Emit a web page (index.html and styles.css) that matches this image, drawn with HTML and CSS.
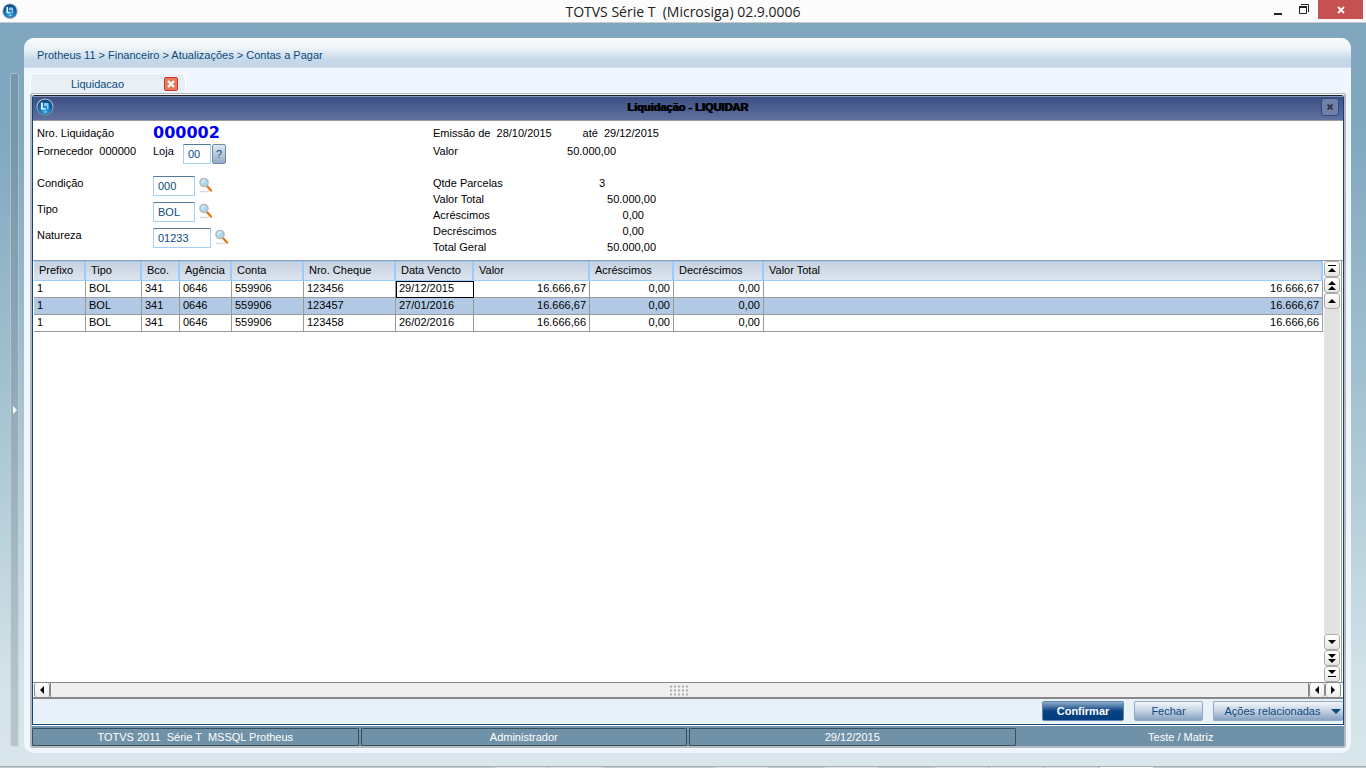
FILE: index.html
```html
<!DOCTYPE html>
<html lang="pt-BR">
<head>
<meta charset="utf-8">
<title>TOTVS Série T (Microsiga) 02.9.0006</title>
<link rel="stylesheet" href="styles.css">
</head>
<body>
<svg class="defs" aria-hidden="true">
  <defs>
    <radialGradient id="orb" cx="50%" cy="75%" r="70%"><stop offset="0" stop-color="#35aee8"/><stop offset=".6" stop-color="#1468ad"/><stop offset="1" stop-color="#0b4582"/></radialGradient>
    <linearGradient id="rim" x1="0" y1="0" x2="0" y2="1"><stop offset="0" stop-color="#c9ced6"/><stop offset="1" stop-color="#6f8396"/></linearGradient>
    <symbol id="logo" viewBox="0 0 18 18">
      <circle cx="9" cy="9" r="8.6" fill="url(#rim)"/><circle cx="9" cy="9" r="7.5" fill="url(#orb)"/>
      <path d="M5 4.500h1.800v5.500h2.700v1.500H5z" fill="#e9f6ff"/><path d="M8 5h4.500v6h-1.500V8H8z" fill="#8fc8ec"/><path d="M8.500 14h2" stroke="#d6f0ff"/>
    </symbol>
    <symbol id="lens" viewBox="0 0 16 16">
      <path d="M2 14.500h9" stroke="#dcdcdc" stroke-width="1.500"/>
      <path d="M8.500 8.500l4.500 5" stroke="#e07b1a" stroke-width="2.400" stroke-linecap="round"/>
      <circle cx="6" cy="5.500" r="4" fill="#a9dcee" stroke="#b4bac0" stroke-width="1.600"/>
      <path d="M4 6a2.500 2.500 0 0 1 3-2.800" stroke="#fff" fill="none"/>
    </symbol>
  </defs>
</svg>
<header class="titlebar">
  <svg class="app-icon"><use href="#logo"/></svg>
  <h1 class="app-title">TOTVS Série T&nbsp; (Microsiga) 02.9.0006</h1>
  <div class="window-controls">
    <button class="control" aria-label="Minimizar"><svg width="8" height="14"><path d="M0 12h8" stroke="#222" stroke-width="2"/></svg></button>
    <button class="control" aria-label="Restaurar"><svg width="11" height="14"><path d="M2 2.500h7.500V10M.500 5.500h7v6h-7z" fill="none" stroke="#222"/><path d="M0 5h8" stroke="#222" stroke-width="2"/></svg></button>
    <button class="control control-close" aria-label="Fechar janela"><svg width="8" height="8"><path d="M1 1l6 6M7 1L1 7" stroke="#fff" stroke-width="1.800"/></svg></button>
  </div>
</header>
<div class="desktop">
  <button class="side-handle" aria-label="Expandir menu"><svg width="4" height="8"><path d="M0 0l4 4-4 4z" fill="#fff"/></svg></button>
  <div class="shell">
    <nav class="breadcrumb">Protheus 11 &gt; Financeiro &gt; Atualizações &gt; Contas a Pagar</nav>
    <div class="workspace">
      <div class="tabs">
        <div class="tab"><span class="tab-label">Liquidacao</span><button class="tab-close" aria-label="Fechar aba"><svg width="8" height="8"><path d="M1 1l6 6M7 1L1 7" stroke="#fff" stroke-width="2.200"/></svg></button></div>
      </div>
      <div class="frame">
        <section class="window">
          <div class="window-head">
            <svg class="window-icon"><use href="#logo"/></svg>
            <h2 class="window-title">Liquidação - LIQUIDAR</h2>
            <button class="window-close" aria-label="Fechar liquidação"><svg width="6" height="6"><path d="M.500.500l5 5M5.500.500l-5 5" stroke="#2b3045" stroke-width="1.800"/></svg></button>
          </div>
          <form class="form">
            <div class="fields">
              <div class="field field-short"><span class="label">Nro. Liquidação</span><output class="number">000002</output></div>
              <div class="field field-store"><span class="label">Fornecedor &nbsp;000000</span><label class="store-label" for="loja">Loja</label><input class="input input-xs" id="loja" value="00"><button type="button" class="help" aria-label="Ajuda">?</button></div>
              <div class="field"><label class="label" for="condicao">Condição</label><input class="input input-sm" id="condicao" value="000"><button type="button" class="lookup" aria-label="Pesquisar condição"><svg><use href="#lens"/></svg></button></div>
              <div class="field"><label class="label" for="tipo">Tipo</label><input class="input input-sm" id="tipo" value="BOL"><button type="button" class="lookup" aria-label="Pesquisar tipo"><svg><use href="#lens"/></svg></button></div>
              <div class="field"><label class="label" for="natureza">Natureza</label><input class="input input-md" id="natureza" value="01233"><button type="button" class="lookup" aria-label="Pesquisar natureza"><svg><use href="#lens"/></svg></button></div>
            </div>
            <div class="summary">
              <div class="period"><span>Emissão de &nbsp;28/10/2015</span><span>até &nbsp;29/12/2015</span></div>
              <dl class="line line-value"><dt>Valor</dt><dd>50.000,00</dd></dl>
              <dl class="line line-count"><dt>Qtde Parcelas</dt><dd>3</dd></dl>
              <dl class="line"><dt>Valor Total</dt><dd>50.000,00</dd></dl>
              <dl class="line line-inset"><dt>Acréscimos</dt><dd>0,00</dd></dl>
              <dl class="line line-inset"><dt>Decréscimos</dt><dd>0,00</dd></dl>
              <dl class="line"><dt>Total Geral</dt><dd>50.000,00</dd></dl>
            </div>
          </form>
          <div class="grid">
            <div class="grid-main">
              <table class="table">
                <colgroup><col class="c-prefix"><col class="c-type"><col class="c-bank"><col class="c-branch"><col class="c-account"><col class="c-check"><col class="c-date"><col class="c-value"><col class="c-add"><col class="c-sub"><col></colgroup>
                <thead><tr><th>Prefixo</th><th>Tipo</th><th>Bco.</th><th>Agência</th><th>Conta</th><th>Nro. Cheque</th><th>Data Vencto</th><th>Valor</th><th>Acréscimos</th><th>Decréscimos</th><th>Valor Total</th></tr></thead>
                <tbody>
                  <tr><td>1</td><td>BOL</td><td>341</td><td>0646</td><td>559906</td><td>123456</td><td class="active">29/12/2015</td><td class="num">16.666,67</td><td class="num">0,00</td><td class="num">0,00</td><td class="num">16.666,67</td></tr>
                  <tr class="alt"><td>1</td><td>BOL</td><td>341</td><td>0646</td><td>559906</td><td>123457</td><td>27/01/2016</td><td class="num">16.666,67</td><td class="num">0,00</td><td class="num">0,00</td><td class="num">16.666,67</td></tr>
                  <tr><td>1</td><td>BOL</td><td>341</td><td>0646</td><td>559906</td><td>123458</td><td>26/02/2016</td><td class="num">16.666,66</td><td class="num">0,00</td><td class="num">0,00</td><td class="num">16.666,66</td></tr>
                </tbody>
              </table>
            </div>
            <div class="vscroll">
              <button class="step" aria-label="Primeira linha"><svg width="8" height="8"><path d="M0 0h8v1H0zM4 3l4 4H0z"/></svg></button>
              <button class="step" aria-label="Página anterior"><svg width="8" height="9"><path d="M4 0l4 4H0zM4 5l4 4H0z"/></svg></button>
              <button class="step" aria-label="Linha anterior"><svg width="8" height="4"><path d="M4 0l4 4H0z"/></svg></button>
              <div class="vtrack"></div>
              <button class="step" aria-label="Próxima linha"><svg width="8" height="4"><path d="M0 0h8L4 4z"/></svg></button>
              <button class="step" aria-label="Próxima página"><svg width="8" height="9"><path d="M0 0h8L4 4zM0 5h8L4 9z"/></svg></button>
              <button class="step" aria-label="Última linha"><svg width="8" height="8"><path d="M0 0h8L4 4zM0 6h8v1H0z"/></svg></button>
            </div>
          </div>
          <div class="hscroll">
            <button class="hstep" aria-label="Rolar para a esquerda"><svg width="4" height="8"><path d="M4 0v8L0 4z"/></svg></button>
            <div class="thumb"><svg width="19" height="11"><path d="M0 1.500h19M0 5.500h19M0 9.500h19" stroke="#b0b0b0" stroke-width="2" stroke-dasharray="2 2"/></svg></div>
            <button class="hstep" aria-label="Recuar"><svg width="4" height="8"><path d="M4 0v8L0 4z"/></svg></button>
            <button class="hstep" aria-label="Rolar para a direita"><svg width="4" height="8"><path d="M0 0v8l4-4z"/></svg></button>
          </div>
          <div class="actions">
            <button class="button button-primary">Confirmar</button>
            <button class="button button-close">Fechar</button>
            <button class="button button-more">Ações relacionadas<svg width="10" height="5"><path d="M0 0h10L5 5z" fill="#0b4a7d"/></svg></button>
          </div>
        </section>
        <footer class="status">
          <span class="cell">TOTVS 2011 &nbsp;Série T &nbsp;MSSQL Protheus</span>
          <span class="cell">Administrador</span>
          <span class="cell">29/12/2015</span>
          <span class="cell cell-last">Teste / Matriz</span>
        </footer>
      </div>
    </div>
  </div>
</div>
<div class="taskbar"><i></i><i></i><i class="far"></i><i class="mid"></i><i class="mid"></i><i></i><i></i><i class="lit"></i></div>
</body>
</html>
```
FILE: styles.css
```css
* { box-sizing: border-box; }
body {
  margin: 0;
  height: 100vh;
  display: flex;
  flex-direction: column;
  overflow: hidden;
  font: 11px/14px "Liberation Sans", Arial, sans-serif;
  color: #000;
}
button, input { font: inherit; padding: 0; margin: 0; }
button { display: flex; align-items: center; justify-content: center; border: 0; background: none; }
svg { display: block; flex: none; }
h1, h2, dl, dd { margin: 0; }
.defs { position: absolute; width: 0; height: 0; }

.titlebar {
  flex: none;
  height: 23px;
  display: grid;
  grid-template-columns: 1fr auto 1fr;
  background: #fcfcfc;
  border-bottom: 1px solid #c9cdd0;
}
.app-icon { width: 16px; height: 16px; margin: 3px 2px; }
.app-title { font: 14px/23px "Open Sans", "Noto Sans", sans-serif; color: #222; }
.window-controls { display: flex; justify-content: flex-end; align-items: flex-start; padding-right: 3px; }
.control { width: 26px; height: 18px; }
.control-close { width: 45px; height: 19px; margin-left: 1px; background: #c75050; }

.desktop {
  flex: 1;
  min-height: 0;
  display: flex;
  padding: 15px 15px 13px 10px;
  gap: 5px;
  background: linear-gradient(#80a6bf, #81a8bf 15%, #a9c6d3 55%, #d2e2e8 88%, #d9e6eb);
}
.side-handle {
  width: 9px;
  margin: 35px 0 6px;
  border: 1px solid rgba(255, 255, 255, .35);
  border-radius: 2px;
  background: rgba(90, 100, 110, .25);
}
.shell {
  flex: 1;
  min-width: 0;
  display: flex;
  flex-direction: column;
  border-radius: 10px;
  background: #eff6fe;
  overflow: hidden;
}
.breadcrumb {
  flex: none;
  height: 30px;
  padding: 10px 13px 0;
  color: #0b4a7d;
  background: linear-gradient(#f9fbfd, #eef3f8 35%, #c6d8e8 75%, #c2d4e6);
  border-bottom: 1px solid #d5e2ef;
}
.workspace {
  flex: 1;
  min-height: 0;
  display: flex;
  flex-direction: column;
  padding: 5px 5px 5px 6px;
}
.tabs { height: 20px; }
.tab {
  width: 156px;
  height: 21px;
  display: flex;
  align-items: center;
  background: #e8eff5;
  border: 1px solid #fff;
  border-bottom: 0;
  border-radius: 3px 3px 0 0;
}
.tab-label { flex: 1; text-align: center; color: #0b4a7d; }
.tab-close { width: 14px; height: 14px; margin-right: 7px; border: 1px solid #cf3326; border-radius: 2px; background: #e27a5b; }
.frame {
  flex: 1;
  min-height: 0;
  display: flex;
  flex-direction: column;
  border: 1px solid #b5b8bd;
  border-width: 1px 2px 2px;
  border-radius: 3px;
}
.window {
  flex: 1;
  min-height: 0;
  display: flex;
  flex-direction: column;
  margin-top: 1px;
  border: 1px solid #0f437c;
  border-top-color: #222;
  border-radius: 3px 3px 0 0;
  background: #fff;
}
.window-head {
  flex: none;
  height: 25px;
  display: grid;
  grid-template-columns: 1fr auto 1fr;
  align-items: center;
  padding: 0 4px 3px 3px;
  background: linear-gradient(#3c5085, #60709f);
  border-top: 1px solid #8796b5;
  border-bottom: 1px solid #999;
}
.window-icon { width: 18px; height: 18px; }
.window-title { font: bold 11px/14px "Liberation Sans", Arial, sans-serif; text-shadow: 1px 0 #000; }
.window-close { justify-self: end; width: 18px; height: 18px; border: 1px solid #2f4a82; border-radius: 3px; background: #7080a9; }

.form { flex: none; display: flex; height: 139px; padding: 5px 4px 0; }
.fields { width: 396px; display: flex; flex-direction: column; }
.field { display: flex; align-items: flex-start; height: 26px; }
.field-short { height: 18px; }
.field-store { height: 32px; }
.label { width: 116px; }
.store-label { width: 30px; }
.number { font: bold 16px/14px "DejaVu Sans", sans-serif; color: #0000f0; }
.input {
  height: 20px;
  padding: 0 4px;
  border: 1px solid #a6cff5;
  border-top-color: #57799b;
  color: #0b4a7d;
  background: #fff;
}
.input-xs { width: 28px; }
.input-sm { width: 42px; }
.input-md { width: 58px; }
.help { width: 14px; height: 20px; margin-left: 1px; border: 1px solid #6f8ba9; border-radius: 2px; color: #0b4a7d; background: linear-gradient(#dfe7ef, #93acc8); }
.lookup { width: 16px; height: 16px; margin: 1px 0 0 3px; }
.lookup svg { width: 16px; height: 16px; }
.summary { width: 240px; }
.period { display: flex; justify-content: space-between; width: 226px; height: 18px; }
.line { display: flex; justify-content: space-between; width: 223px; height: 16px; }
.line-value { width: 183px; height: 32px; }
.line-count { width: 172px; }
.line-inset { width: 211px; }

.grid { flex: 1; min-height: 0; display: flex; border-top: 1px solid #999; }
.grid-main { flex: 1; min-width: 0; padding-left: 1px; }
.table { width: 100%; table-layout: fixed; border-collapse: separate; border-spacing: 0; }
.table th {
  height: 20px;
  padding: 0 4px 3px 5px;
  text-align: left;
  font-weight: normal;
  white-space: nowrap;
  border: solid #99ccff;
  border-width: 1px 2px 1px 0;
  background: linear-gradient(#c8d2df, #dbe4ef);
}
.table td { height: 17px; padding: 0 3px 2px; border: solid #999; border-width: 0 1px 1px 0; }
.table .num { text-align: right; }
.table .alt { background: #b1c9e5; }
.table .active { outline: 1px solid #000; outline-offset: -1px; }
.c-prefix { width: 52px; }
.c-type { width: 56px; }
.c-bank { width: 38px; }
.c-branch { width: 52px; }
.c-account { width: 72px; }
.c-check { width: 92px; }
.c-date { width: 78px; }
.c-value { width: 116px; }
.c-add { width: 84px; }
.c-sub { width: 90px; }
.vscroll { width: 19px; display: flex; flex-direction: column; padding: 0 1px; margin-right: 1px; border-right: 1px solid #999; }
.step { flex: none; height: 16px; border: 1px solid #aaa; border-radius: 3px; background: linear-gradient(#fff, #e4e4e4); }
.vtrack { flex: 1; background: #e2e2e2; }
.hscroll { flex: none; display: flex; height: 17px; padding: 0 2px 0 1px; border: 1px solid #888; border-width: 1px 0 2px; }
.hstep { width: 16px; border: 1px solid #888; border-width: 0 1px; border-radius: 3px; background: linear-gradient(#fff, #ececec); }
.thumb { flex: 1; display: flex; align-items: center; justify-content: center; border: 1px solid #888; border-width: 0 1px; background: #efefef; }
.actions { flex: none; display: flex; justify-content: flex-end; gap: 10px; height: 25px; padding-top: 2px; background: #e8f0f8; border-bottom: 1px solid #fff; }
.button { height: 20px; border: 1px solid #8fa9c4; border-radius: 2px; color: #0b4a7d; background: linear-gradient(#f3f7fb, #c3d1e1 50%, #87a3c1); }
.button-primary { width: 82px; font-weight: bold; color: #fff; border-color: #5f86ad; background: linear-gradient(#8fadc9, #0a4384 50%, #003e7e); }
.button-close { width: 69px; }
.button-more { width: 130px; gap: 10px; padding-left: 8px; border-right: 0; }

.status { flex: none; display: grid; grid-template-columns: repeat(4, 1fr); gap: 2px; height: 21px; padding-top: 2px; background: #7092a8; border-top: 1px solid #fff; }
.cell { height: 18px; text-align: center; line-height: 16px; color: #fff; border: 1px solid #37505f; border-radius: 1px; }
.cell-last { border-color: transparent; }
.taskbar { flex: none; display: flex; gap: 2px; height: 2px; padding-left: 495px; background: #c3cbcd; border-top: 1px solid #a9b0b3; }
.taskbar i { width: 53px; background: #dde2e3; }
.taskbar .far { margin-left: 110px; }
.taskbar .mid { margin-left: 55px; }
.taskbar .lit { background: #fff; }
```
